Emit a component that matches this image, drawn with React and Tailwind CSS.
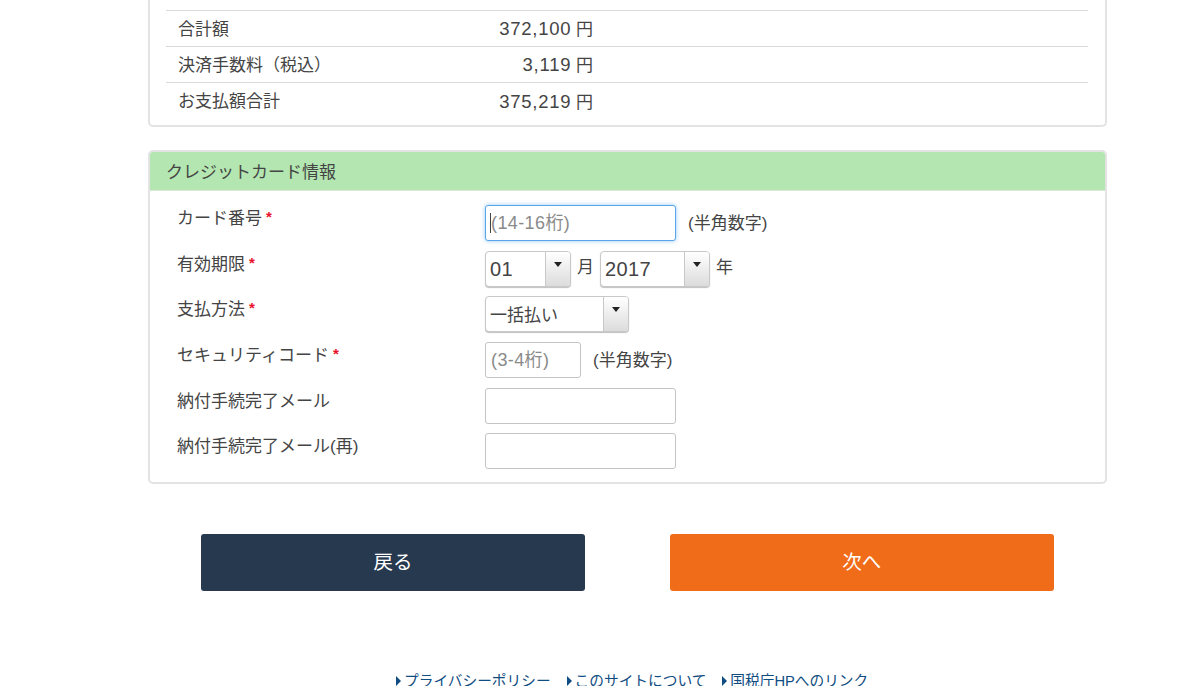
function Req() {
  return <span className="text-[#e8132a] text-[15px] leading-none ml-[4px] font-bold align-[2px]">*</span>;
}

function Row({ label, value, last, className = '' }) {
  return (
    <div className={`flex h-9 items-center px-3 border-[#d9d9d9] ${last ? '' : 'border-b'} ${className}`}>
      <div className="w-[300px] shrink-0 pt-[2px]">{label}</div>
      <div className="w-[115px] text-right pt-[1px]">
        <span className="text-[18.5px] tracking-[0.75px]">{value}</span> 円
      </div>
    </div>
  );
}

function SelectBox({ width, value, jp }) {
  return (
    <div className={`${width} h-9 flex rounded-[4px] border border-[#c8c8c8] shadow-[0_1px_1px_rgba(0,0,0,0.25)] overflow-hidden bg-white`}>
      <div className={`flex-1 px-1 flex items-center ${jp ? 'text-[17px] pt-[2px]' : 'text-[20px] tracking-[0.35px]'}`}>{value}</div>
      <div className="w-[25px] border-l border-[#c8c8c8] bg-gradient-to-b from-white to-[#dcdcdc] flex justify-center pt-[10px]">
        <div className="w-0 h-0 border-l-[4.5px] border-r-[4.5px] border-t-[5px] border-l-transparent border-r-transparent border-t-[#222]" />
      </div>
    </div>
  );
}

function TextBox({ width, placeholder, focus }) {
  return (
    <div className={`relative ${width}`}>
      <input
        placeholder={placeholder}
        className={`w-full h-9 px-[5px] pt-[1px] bg-white rounded-[3px] text-[18px] tracking-[0.4px] placeholder:text-[#8a8a8a] outline-none border ${
          focus ? 'border-[#5aa4ec] shadow-[0_0_4px_rgba(82,168,236,0.6)]' : 'border-[#c4c4c4]'
        }`}
      />
      {/* カーソル */}
      {focus && <div className="absolute left-[5px] top-[8px] w-px h-5 bg-[#444]" />}
    </div>
  );
}

function Field({ label, required, children }) {
  return (
    <div className="flex h-[45.7px]">
      <div className="w-[308px] shrink-0 leading-6 pt-[2px]">
        {label}
        {required && <Req />}
      </div>
      <div className="flex items-start">{children}</div>
    </div>
  );
}

function FootLink({ children }) {
  return (
    <a className="flex items-center text-[#0f4c81] text-[14.7px]">
      <span className="w-0 h-0 mr-[3px] border-t-[5px] border-b-[5px] border-l-[5px] border-t-transparent border-b-transparent border-l-[#0f4c81]" />
      {children}
    </a>
  );
}

export default function App() {
  return (
    <div
      className="h-[686px] overflow-hidden bg-white text-[#444] text-[17px]"
      style={{ fontFamily: '"Liberation Sans", "Noto Sans CJK JP", sans-serif' }}
    >
      <div className="w-[959px] ml-[148px] -mt-[25px]">
        {/* 金額 */}
        <div className="border-2 border-t-0 border-[#e3e3e3] rounded-b-[5px] pl-[16px] pr-[17px] pb-[6px]">
          <Row label="税額(円)" value="0" className="pb-[4px]" />
          <Row label="合計額" value="372,100" />
          <Row label="決済手数料（税込）" value="3,119" />
          <Row label="お支払額合計" value="375,219" last />
        </div>

        {/* クレジットカード情報 */}
        <div className="mt-[23px] border-2 border-[#e3e3e3] rounded-[5px] overflow-hidden">
          <div className="h-[39px] bg-[#b3e6b0] border-b border-[#d9e9d6] px-[16px] pt-[3px] flex items-center">クレジットカード情報</div>
          <div className="px-[27px] pt-[14px] pb-[3px]">
            <Field label="カード番号" required>
              <TextBox width="w-[191px]" placeholder="(14-16桁)" focus />
              <span className="ml-3 mt-[6px]">(半角数字)</span>
            </Field>
            <Field label="有効期限" required>
              <SelectBox width="w-[86px]" value="01" />
              <span className="mx-[6px] mt-[4px]">月</span>
              <SelectBox width="w-[110px]" value="2017" />
              <span className="ml-[6px] mt-[4px]">年</span>
            </Field>
            <Field label="支払方法" required>
              <SelectBox width="w-[144px]" value="一括払い" jp />
            </Field>
            <Field label="セキュリティコード" required>
              <TextBox width="w-[96px]" placeholder="(3-4桁)" />
              <span className="ml-3 mt-[6px]">(半角数字)</span>
            </Field>
            <Field label="納付手続完了メール">
              <TextBox width="w-[191px]" />
            </Field>
            <Field label="納付手続完了メール(再)">
              <TextBox width="w-[191px]" />
            </Field>
          </div>
        </div>

        {/* ボタン */}
        <div className="flex mt-[50px] ml-[53px] gap-[85px]">
          <button className="w-[384px] h-[57px] pb-[1px] rounded-[3px] bg-[#27394f] text-white text-[19.5px]">戻る</button>
          <button className="w-[383.5px] h-[57px] pb-[1px] rounded-[3px] bg-[#f06c19] text-white text-[19.5px]">次へ</button>
        </div>

        {/* フッター */}
        <div className="flex mt-[79px] ml-[248px] gap-4">
          <FootLink>プライバシーポリシー</FootLink>
          <FootLink>このサイトについて</FootLink>
          <FootLink>国税庁HPへのリンク</FootLink>
        </div>
      </div>
    </div>
  );
}
